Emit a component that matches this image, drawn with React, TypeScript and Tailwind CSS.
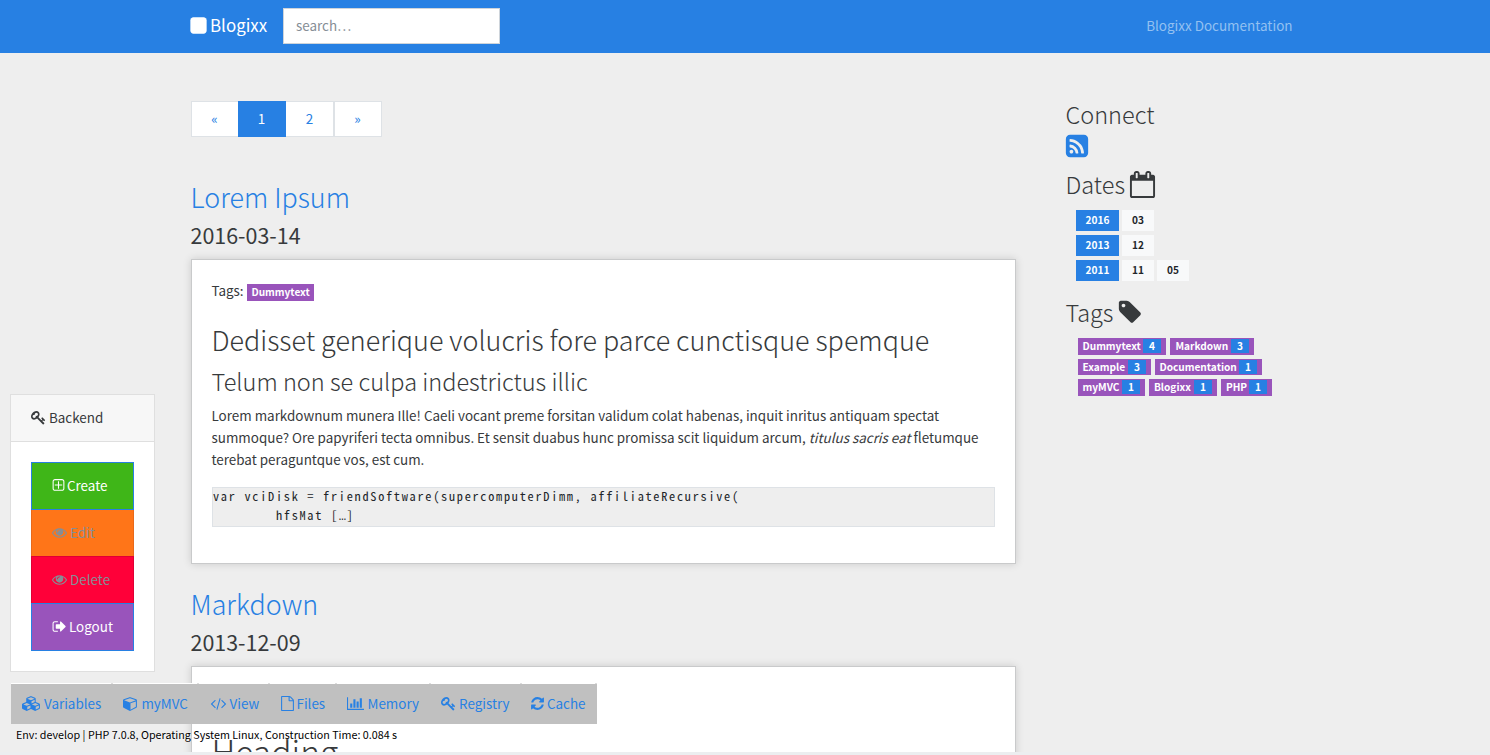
import React from "react";

type Glyph = { w: number; d: string };

const glyphs: Record<string, Glyph> = {
  square: {
    w: 1792,
    d: "M1664 416v960q0 119-84.5 203.5t-203.5 84.5h-960q-119 0-203.5-84.5t-84.5-203.5v-960q0-119 84.5-203.5t203.5-84.5h960q119 0 203.5 84.5t84.5 203.5z",
  },
  eye: {
    w: 1792,
    d: "M1664 960q-152-236-381-353 61 104 61 225 0 185-131.5 316.5t-316.5 131.5-316.5-131.5-131.5-316.5q0-121 61-225-229 117-381 353 133 205 333.5 326.5t434.5 121.5 434.5-121.5 333.5-326.5zm-720-384q0-20-14-34t-34-14q-125 0-214.5 89.5t-89.5 214.5q0 20 14 34t34 14 34-14 14-34q0-86 61-147t147-61q20 0 34-14t14-34zm848 384q0 34-20 69-140 230-376.5 368.5t-499.5 138.5-499.5-139-376.5-368q-20-35-20-69t20-69q140-229 376.5-368t499.5-139 499.5 139 376.5 368q20 35 20 69z",
  },
  signOut: {
    w: 1792,
    d: "M704 1440q0 4 1 20t.5 26.5-3 23.5-10 19.5-20.5 6.5h-320q-119 0-203.5-84.5t-84.5-203.5v-704q0-119 84.5-203.5t203.5-84.5h320q13 0 22.5 9.5t9.5 22.5q0 4 1 20t.5 26.5-3 23.5-10 19.5-20.5 6.5h-320q-66 0-113 47t-47 113v704q0 66 47 113t113 47h312l11.5 1 11.5 3 8 5.5 7 9 2 13.5zm928-544q0 26-19 45l-544 544q-19 19-45 19t-45-19-19-45v-288h-448q-26 0-45-19t-19-45v-384q0-26 19-45t45-19h448v-288q0-26 19-45t45-19 45 19l544 544q19 19 19 45z",
  },
  plus: {
    w: 1792,
    d: "M1344 800v64q0 14-9 23t-23 9h-352v352q0 14-9 23t-23 9h-64q-14 0-23-9t-9-23v-352h-352q-14 0-23-9t-9-23v-64q0-14 9-23t23-9h352v-352q0-14 9-23t23-9h64q14 0 23 9t9 23v352h352q14 0 23 9t9 23zm128 448v-832q0-66-47-113t-113-47h-832q-66 0-113 47t-47 113v832q0 66 47 113t113 47h832q66 0 113-47t47-113zm128-832v832q0 119-84.5 203.5t-203.5 84.5h-832q-119 0-203.5-84.5t-84.5-203.5v-832q0-119 84.5-203.5t203.5-84.5h832q119 0 203.5 84.5t84.5 203.5z",
  },
  key: {
    w: 1792,
    d: "M832 512q0-80-56-136t-136-56-136 56-56 136q0 42 19 83-41-19-83-19-80 0-136 56t-56 136 56 136 136 56 136-56 56-136q0-42-19-83 41 19 83 19 80 0 136-56t56-136zm851 704q0 17-49 66t-66 49q-9 0-28.5-16t-36.5-33-38.5-40-24.5-26l-96 96 220 220q28 28 28 68 0 42-39 81t-81 39q-40 0-68-28l-671-671q-176 131-365 131-163 0-265.5-102.5t-102.5-265.5q0-160 95-313t248-248 313-95q163 0 265.5 102.5t102.5 265.5q0 189-131 365l355 355 96-96q-3-3-26-24.5t-40-38.5-33-36.5-16-28.5q0-17 49-66t66-49q13 0 23 10 6 6 46 44.5t82 79.5 86.5 86 73 78 28.5 41z",
  },
  calendar: {
    w: 1792,
    d: "M192 1664h1408v-1024h-1408v1024zm384-1216v-288q0-14-9-23t-23-9h-64q-14 0-23 9t-9 23v288q0 14 9 23t23 9h64q14 0 23-9t9-23zm768 0v-288q0-14-9-23t-23-9h-64q-14 0-23 9t-9 23v288q0 14 9 23t23 9h64q14 0 23-9t9-23zm384-64v1280q0 52-38 90t-90 38h-1408q-52 0-90-38t-38-90v-1280q0-52 38-90t90-38h128v-96q0-66 47-113t113-47h64q66 0 113 47t47 113v96h384v-96q0-66 47-113t113-47h64q66 0 113 47t47 113v96h128q52 0 90 38t38 90z",
  },
  tag: {
    w: 1792,
    d: "M576 448q0-53-37.5-90.5t-90.5-37.5-90.5 37.5-37.5 90.5 37.5 90.5 90.5 37.5 90.5-37.5 37.5-90.5zm1067 576q0 53-37 90l-491 492q-39 37-91 37-53 0-90-37l-715-716q-38-37-64.5-101t-26.5-117v-416q0-52 38-90t90-38h416q53 0 117 26.5t102 64.5l715 714q37 39 37 91z",
  },
  rss: {
    w: 1792,
    d: "M640 1280q0-53-37.5-90.5t-90.5-37.5-90.5 37.5-37.5 90.5 37.5 90.5 90.5 37.5 90.5-37.5 37.5-90.5zm351 94q-13-232-177-396t-396-177q-14-1-24 9t-10 23v128q0 13 8.5 22t21.5 10q154 11 264 121t121 264q1 13 10 21.5t22 8.5h128q13 0 23-10t9-24zm384 1q-5-154-56-297.5t-139.5-260-205-205-260-139.5-297.5-56q-14-1-23 9-10 10-10 23v128q0 13 9 22t22 10q204 7 378 111.5t278.5 278.5 111.5 378q1 13 10 22t22 9h128q13 0 23-10 11-9 9-23zm289-959v960q0 119-84.5 203.5t-203.5 84.5h-960q-119 0-203.5-84.5t-84.5-203.5v-960q0-119 84.5-203.5t203.5-84.5h960q119 0 203.5 84.5t84.5 203.5z",
  },
  file: {
    w: 1792,
    d: "M1596 380q28 28 48 76t20 88v1152q0 40-28 68t-68 28h-1344q-40 0-68-28t-28-68v-1600q0-40 28-68t68-28h896q40 0 88 20t76 48zm-444-244v376h376q-10-29-22-41l-313-313q-12-12-41-22zm384 1528v-1024h-416q-40 0-68-28t-28-68v-416h-768v1536h1280z",
  },
  chart: {
    w: 2048,
    d: "M640 896v512h-256v-512h256zm384-512v1024h-256v-1024h256zm1024 1152v128h-2048v-1536h128v1408h1920zm-640-896v768h-256v-768h256zm384-384v1152h-256v-1152h256z",
  },
  refresh: {
    w: 1792,
    d: "M1639 1056q0 5-1 7-64 268-268 434.5t-478 166.5q-146 0-282.5-55t-243.5-157l-129 129q-19 19-45 19t-45-19-19-45v-448q0-26 19-45t45-19h448q26 0 45 19t19 45-19 45l-137 137q71 66 161 102t187 36q134 0 250-65t186-179q11-17 53-117 8-23 30-23h192q13 0 22.5 9.5t9.5 22.5zm25-800v448q0 26-19 45t-45 19h-448q-26 0-45-19t-19-45 19-45l138-138q-148-137-349-137-134 0-250 65t-186 179q-11 17-53 117-8 23-30 23h-199q-13 0-22.5-9.5t-9.5-22.5v-7q65-268 270-434.5t480-166.5q146 0 284 55.5t245 156.5l130-129q19-19 45-19t45 19 19 45z",
  },
  code: {
    w: 2048,
    d: "M681 1399l-50 50q-10 10-23 10t-23-10l-466-466q-10-10-10-23t10-23l466-466q10-10 23-10t23 10l50 50q10 10 10 23t-10 23l-393 393 393 393q10 10 10 23t-10 23zm591-1067l-373 1291q-4 13-15.5 19.5t-23.5 2.5l-62-17q-13-4-19.5-15.5t-2.5-24.5l373-1291q4-13 15.5-19.5t23.5-2.5l62 17q13 4 19.5 15.5t2.5 24.5zm657 651l-466 466q-10 10-23 10t-23-10l-50-50q-10-10-10-23t10-23l393-393-393-393q-10-10-10-23t10-23l50-50q10-10 23-10t23 10l466 466q10 10 10 23t-10 23z",
  },
  cube: {
    w: 1792,
    d: "M896 1629l640-349v-636l-640 233v752zm-64-865l698-254-698-254-698 254zm832-252v768q0 35-18 65t-49 47l-704 384q-28 16-61 16t-61-16l-704-384q-31-17-49-47t-18-65v-768q0-40 23-73t61-47l704-256q22-8 44-8t44 8l704 256q38 14 61 47t23 73z",
  },
  cubes: {
    w: 2304,
    d: "M640 1632l384-192v-314l-384 164v342zm-64-454l404-173-404-173-404 173zm1088 454l384-192v-314l-384 164v342zm-64-454l404-173-404-173-404 173zm-448-293l384-165v-266l-384 164v267zm-64-379l441-189-441-189-441 189zm1088 518v416q0 36-19 67t-52 47l-448 224q-25 14-57 14t-57-14l-448-224q-4-2-7-4-2 2-7 4l-448 224q-25 14-57 14t-57-14l-448-224q-33-16-52-47t-19-67v-416q0-38 21.5-70t56.5-48l434-186v-400q0-38 21.5-70t56.5-48l448-192q23-10 50-10t50 10l448 192q35 16 56.5 48t21.5 70v400l434 186q36 16 57 48t21 70z",
  },
};

function Icon({ name, className }: { name: string; className: string }) {
  const g = glyphs[name];
  return (
    <svg viewBox={`0 0 ${g.w} 1792`} fill="currentColor" className={`shrink-0 ${className}`}>
      <path d={g.d} />
    </svg>
  );
}

const years = [
  { year: "2016", months: ["03"] },
  { year: "2013", months: ["12"] },
  { year: "2011", months: ["11", "05"] },
];

const tagRows = [
  [
    { name: "Dummytext", count: 4, size: "w-[88px]", pad: "pl-[4.5px]" },
    { name: "Markdown", count: 3, size: "w-[84px]", pad: "pl-[5.5px]" },
  ],
  [
    { name: "Example", count: 3, size: "w-[73px]", pad: "pl-[4.5px]" },
    { name: "Documentation", count: 1, size: "w-[107px]", pad: "pl-[4.5px]" },
  ],
  [
    { name: "myMVC", count: 1, size: "w-[67px]", pad: "pl-[4.5px]" },
    { name: "Blogixx", count: 1, size: "w-[68px]", pad: "pl-[5px]" },
    { name: "PHP", count: 1, size: "w-[51px]", pad: "pl-[5px]" },
  ],
];

const tools = [
  { label: "Variables", icon: "cubes", iconSize: "w-[19px] h-[15px] mr-[3px]", size: "w-[102px] pl-[11px]" },
  { label: "myMVC", icon: "cube", iconSize: "w-[15px] h-[15px] mr-[3px]", size: "w-[86px] pl-[10.4px]" },
  { label: "View", icon: "code", iconSize: "w-[17px] h-[15px] mr-[2.5px]", size: "w-[71px] pl-[11px]" },
  { label: "Files", icon: "file", iconSize: "w-[15px] h-[15px] mr-[1.5px]", size: "w-[67px] pl-[10px]" },
  { label: "Memory", icon: "chart", iconSize: "w-[17px] h-[15px] mr-[3.5px]", size: "w-[94px] pl-[10px]" },
  { label: "Registry", icon: "key", iconSize: "w-[15px] h-[15px] mr-[3px]", size: "w-[91px] pl-[10px]" },
  { label: "Cache", icon: "refresh", iconSize: "w-[15px] h-[15px] mr-[2px]", size: "w-[75px] pl-[8px]" },
];

function Navbar() {
  return (
    <header className="flex h-[53px] shrink-0 items-center bg-[#2780e3] pr-[197.5px] pb-[2px] pl-[190px]">
      <Icon name="square" className="-ml-px mr-[2px] -mt-px h-[19px] w-[19px] text-white" />
      <span className="w-[73px] pb-px text-[16.9px] leading-[26px] whitespace-nowrap text-white">Blogixx</span>
      <input
        placeholder="search…"
        className="h-9 w-[217px] border border-[#ced4da] bg-white px-3 pb-[2px] text-[13.43px] text-[#495057] placeholder:text-[#868e96]"
      />
      <a className="ml-auto pb-[2px] text-[13.46px] leading-[22px] text-[#93c0f1]">Blogixx Documentation</a>
    </header>
  );
}

function Pagination() {
  return (
    <nav className="flex h-9 text-[13.43px] leading-[32px] text-[#2780e3]">
      <a className="w-12 border border-[#dee2e6] bg-white pr-px text-center">«</a>
      <a className="-ml-px w-12 border border-[#2780e3] bg-[#2780e3] pr-px text-center text-white">1</a>
      <a className="w-12 border border-l-0 border-[#dee2e6] bg-white text-center">2</a>
      <a className="w-12 border border-[#dee2e6] bg-white pr-px text-center">»</a>
    </nav>
  );
}

function Article({ title, date, children, className }: { title: string; date: string; children: React.ReactNode; className: string }) {
  return (
    <article className={`flex flex-col ${className}`}>
      <h2 className="-ml-[0.5px] h-9 text-[26.86px] leading-[34px] font-light text-[#2780e3]">{title}</h2>
      <p className="-ml-[0.5px] mt-[5px] h-7 text-[21.45px] leading-7">{date}</p>
      <div className="mt-[10px] h-[305px] shrink-0 border border-[#c9cacb] bg-white pr-5 pl-[19.5px] shadow-[0_0_8px_rgba(0,0,0,0.15)]">{children}</div>
    </article>
  );
}

function Sidebar() {
  return (
    <aside className="flex flex-col pt-[45px]">
      <h3 className="-ml-[0.5px] h-[34px] text-[23.5px] leading-[32px] font-light">Connect</h3>
      <Icon name="rss" className="-ml-[2.5px] mt-px h-[26px] w-[26px] text-[#2780e3]" />
      <h3 className="-ml-[0.5px] mt-[9px] flex h-[34px] items-center pb-[2px] text-[23.5px] leading-[32px] font-light">
        Dates
        <Icon name="calendar" className="ml-[3.5px] h-[27px] w-[27px]" />
      </h3>
      <div className="mt-2 ml-[10px] flex flex-col gap-1 text-[10.1px] leading-[19px] font-bold">
        {years.map((y) => (
          <div key={y.year} className="flex h-[21px] gap-[3px]">
            <span className="w-[43px] bg-[#2780e3] text-center text-white">{y.year}</span>
            {y.months.map((m) => (
              <span key={m} className="w-8 bg-[#f8f9fa] text-center text-[#212529]">{m}</span>
            ))}
          </div>
        ))}
      </div>
      <h3 className="-ml-[0.5px] mt-[15px] flex h-[34px] items-center pb-[2px] text-[23.5px] leading-[32px] font-light">
        Tags
        <Icon name="tag" className="ml-[3.5px] h-[26px] w-[26px]" />
      </h3>
      <div className="mt-2 ml-3 flex flex-col gap-[4px]">
        {tagRows.map((row, i) => (
          <div key={i} className="flex h-[16.5px] gap-1 text-[10.1px] leading-4 font-bold text-white">
            {row.map((t) => (
              <span key={t.name} className={`flex items-center justify-between bg-[#9954bb] pr-[5px] ${t.size} ${t.pad}`}>
                {t.name}
                <span className="h-[14px] w-[18px] bg-[#2780e3] text-center leading-[14px]">{t.count}</span>
              </span>
            ))}
          </div>
        ))}
      </div>
    </aside>
  );
}

function BackendPanel() {
  const row = "flex items-center border pb-[2px] pl-5";
  return (
    <section className="absolute top-[394px] left-[10px] flex h-[278px] w-[145px] flex-col border border-[#dfdfdf] bg-white text-[13.43px]">
      <h4 className="flex h-[47px] shrink-0 items-center border-b border-[#dfdfdf] bg-[#f7f7f7] pb-[2px] pl-5">
        <Icon name="key" className="mr-[3px] h-[15px] w-[15px]" />
        Backend
      </h4>
      <div className="mx-5 mt-5 flex flex-col">
        <a className={`${row} h-12 border-[#2780e3] bg-[#3fb618] text-white`}>
          <Icon name="plus" className="-ml-px mr-[1px] h-[15px] w-[15px]" />
          Create
        </a>
        <a className={`${row} h-[46px] border-y-0 border-[#e9691a] bg-[#ff7518] text-[#868e96]`}>
          <Icon name="eye" className="mr-[3px] h-[15px] w-[15px]" />
          Edit
        </a>
        <a className={`${row} h-[47px] border-b-0 border-[#e00034] bg-[#ff0039] text-[#868e96]`}>
          <Icon name="eye" className="mr-[3px] h-[15px] w-[15px]" />
          Delete
        </a>
        <a className={`${row} h-12 border-[#2780e3] bg-[#9954bb] text-white`}>
          <Icon name="signOut" className="mr-[2px] h-[15px] w-[15px]" />
          Logout
        </a>
      </div>
    </section>
  );
}

function DebugBar() {
  return (
    <section className="absolute top-[683px] left-[11px] flex flex-col">
      <div className="flex h-px w-[586px] bg-white">
        {tools.map((t) => (
          <i key={t.label} className={`h-px border-r-2 border-[#dddddd] ${t.size}`} />
        ))}
      </div>
      <nav className="flex h-10 w-[586px] bg-[#c0c0c0] text-[13.43px] text-[#2780e3]">
        {tools.map((t) => (
          <a key={t.label} className={`flex items-center pb-[2px] whitespace-nowrap ${t.size}`}>
            <Icon name={t.icon} className={t.iconSize} />
            {t.label}
          </a>
        ))}
      </nav>
      <p className="pt-[2px] pl-[5px] text-[10.74px] leading-[18px] whitespace-nowrap text-black [text-shadow:0_0_2px_#fff]">
        Env: develop | PHP 7.0.8, Operating System Linux, Construction Time: 0.084 s
      </p>
    </section>
  );
}

export default function App() {
  return (
    <div className="relative h-[755px] w-[1490px] overflow-hidden bg-[#eceef0] font-['Noto_Sans_CJK_JP',sans-serif] text-[#373a3c]">
      <div className="flex h-[752px] flex-col overflow-hidden bg-[#eeeeee]">
        <Navbar />
        <div className="flex">
          <main className="ml-[191px] flex w-[825px] flex-col pt-12">
            <Pagination />
            <Article title="Lorem Ipsum" date="2016-03-14" className="mt-[43px]">
              <p className="mt-[19px] flex h-[22px] items-center text-[13.43px] leading-[22px]">
                Tags:
                <span className="mt-[4px] ml-[3.5px] h-[17px] w-[67px] bg-[#9954bb] text-center text-[10.1px] leading-[16px] font-bold text-white">Dummytext</span>
              </p>
              <h1 className="mt-[21px] h-9 text-[26.9px] leading-9 font-light whitespace-nowrap">
                Dedisset generique volucris fore parce cunctisque spemque
              </h1>
              <h2 className="mt-[7px] h-8 text-[23.54px] leading-8 font-light whitespace-nowrap">Telum non se culpa indestrictus illic</h2>
              <p className="mt-[7px] text-[13.435px] leading-[22px] whitespace-nowrap">
                Lorem markdownum munera Ille! Caeli vocant preme forsitan validum colat habenas, inquit inritus antiquam spectat
                <br />
                summoque? Ore papyriferi tecta omnibus. Et sensit duabus hunc promissa scit liquidum arcum, <em>titulus sacris eat</em> fletumque
                <br />
                terebat peraguntque vos, est cum.
              </p>
              <pre className="mt-[17px] ml-[0.5px] h-10 border border-[#dee2e6] bg-[#eeeeee] text-[#212529]">
                <code className="-mt-px block font-['Noto_Sans_Mono_CJK_JP','Noto_Sans_CJK_JP',monospace] text-[12.3px] leading-[19px] tracking-[1.715px]">
                  {"var vciDisk = friendSoftware(supercomputerDimm, affiliateRecursive(\n        hfsMat ["}
                  <span className="font-['Liberation_Mono',monospace] tracking-[0.48px]">…</span>]
                </code>
              </pre>
            </Article>
            <Article title="Markdown" date="2013-12-09" className="mt-[23px]">
              <h1 className="mt-[64px] text-[33.6px] leading-[40px] font-light">Heading</h1>
            </Article>
          </main>
          <div className="ml-[50px]">
            <Sidebar />
          </div>
        </div>
      </div>
      <BackendPanel />
      <DebugBar />
    </div>
  );
}
